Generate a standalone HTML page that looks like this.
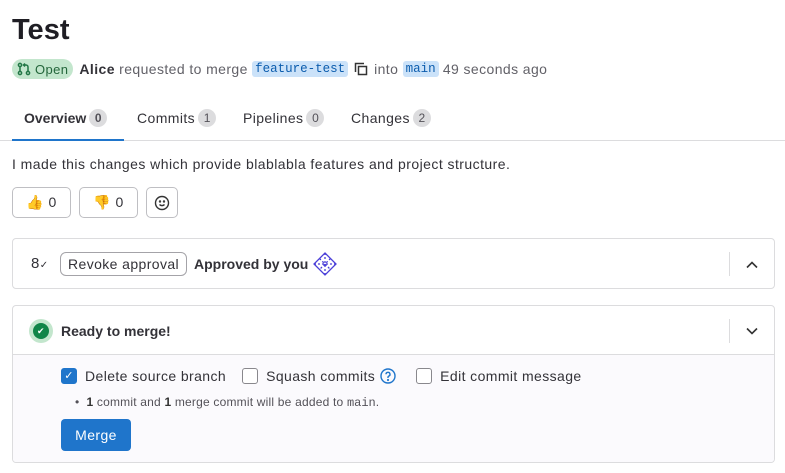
<!DOCTYPE html>
<html><head><style>
*{box-sizing:border-box;margin:0;padding:0}
body{width:785px;height:473px;background:#fff;font-family:"Liberation Sans",sans-serif;color:#333238;font-size:14px;position:relative;overflow:hidden;letter-spacing:0.4px}
.abs{position:absolute}
.mono{font-family:"Liberation Mono",monospace;font-size:12.5px;letter-spacing:0}
.code{background:#cbe2f9;color:#0b5cad;border-radius:3px;padding:1px 3px}
.cnt{display:inline-block;background:#dcdcde;color:#535158;border-radius:10px;font-size:12px;min-width:18px;height:18px;line-height:18px;text-align:center;margin-left:3px;letter-spacing:0}
.btn{position:absolute;border:1px solid #bfbfc3;border-radius:5px;background:#fff;display:flex;align-items:center;justify-content:center;font-size:14px}
.card{position:absolute;left:12px;width:763px;border:1px solid #dcdcde;border-radius:4px}
.cb{display:inline-block;width:16px;height:16px;border:1px solid #89888d;border-radius:3px;vertical-align:middle;margin-right:8px;background:#fff}
</style></head><body>
<div class="abs" style="left:12px;top:14px;font-size:29px;font-weight:bold;color:#1f1e24;letter-spacing:0">Test</div>
<div class="abs" style="left:12px;top:59px;height:20px;display:flex;align-items:center;white-space:nowrap;color:#626168">
 <span style="background:#c3e6cd;color:#24663b;border-radius:10px;padding:0 5px;height:20px;display:inline-flex;align-items:center;font-size:13px"><svg width="14" height="14" viewBox="0 0 14 14" fill="none" stroke="#217645" stroke-width="1.5"><circle cx="3" cy="3" r="1.6"/><circle cx="3" cy="11" r="1.6"/><circle cx="11" cy="11" r="1.6"/><path d="M3 4.6v4.8M11 9.4V5a2 2 0 0 0-2-2H7M8 1.5 6.5 3 8 4.5"/></svg>&nbsp;Open</span>
 <b style="color:#333238;margin-left:6px">Alice</b>&nbsp;requested to merge&nbsp;<span class="mono code">feature-test</span>
 <svg style="margin:0 6px" width="14" height="14" viewBox="0 0 14 14" fill="none" stroke="#333" stroke-width="1.5"><path d="M1.5 10V1.5H10"/><rect x="4.5" y="4.5" width="8" height="8"/></svg>into&nbsp;<span class="mono code">main</span>&nbsp;49 seconds ago
</div>
<div class="abs" style="left:0;top:140px;width:785px;height:1px;background:#dcdcde"></div>
<div class="abs" style="left:12px;top:139px;width:112px;height:2px;background:#1f75cb"></div>
<div class="abs" style="left:24px;top:109px;color:#333238;font-weight:bold;display:flex;align-items:center;letter-spacing:0">Overview<span class="cnt">0</span></div>
<div class="abs" style="left:137px;top:109px;display:flex;align-items:center">Commits<span class="cnt">1</span></div>
<div class="abs" style="left:243px;top:109px;display:flex;align-items:center">Pipelines<span class="cnt">0</span></div>
<div class="abs" style="left:351px;top:109px;display:flex;align-items:center">Changes<span class="cnt">2</span></div>
<div class="abs" style="left:12px;top:156px;letter-spacing:0.45px">I made this changes which provide blablabla features and project structure.</div>
<div class="btn" style="left:12px;top:187px;width:59px;height:31px">👍&nbsp;0</div>
<div class="btn" style="left:79px;top:187px;width:59px;height:31px">👎&nbsp;0</div>
<div class="btn" style="left:146px;top:187px;width:32px;height:31px"><svg width="16" height="16" viewBox="0 0 16 16" fill="none" stroke="#333" stroke-width="1.4"><circle cx="8" cy="8" r="6.5"/><circle cx="6" cy="6.5" r=".5"/><circle cx="10" cy="6.5" r=".5"/><path d="M5.5 9.5c1.3 1.5 3.7 1.5 5 0"/></svg></div>
<div class="card" style="top:238px;height:51px">
 <div class="abs" style="left:18px;top:16px;font-size:15px">8<span style="font-size:10px">✓</span></div>
 <div class="abs" style="left:47px;top:13px;height:24px;border:1px solid #a4a3a8;border-radius:6px;padding:0 7px;line-height:22px">Revoke approval</div>
 <div class="abs" style="left:181px;top:17px;font-weight:bold;letter-spacing:0">Approved by you</div>
 <svg class="abs" style="left:300px;top:13px" width="24" height="24" viewBox="0 0 24 24" fill="none" stroke="#4b3fd8" stroke-width="1.3"><path d="M12 1 23 12 12 23 1 12Z"/><path d="M6.5 6.5 17.5 17.5M17.5 6.5 6.5 17.5M12 1v22M1 12h22" stroke-dasharray="2 2"/></svg>
 <div class="abs" style="left:716px;top:13px;width:1px;height:24px;background:#dcdcde"></div>
 <svg class="abs" style="left:732px;top:19px" width="14" height="14" viewBox="0 0 14 14" fill="none" stroke="#333" stroke-width="1.6"><path d="M2 9.5 7 4.5l5 5"/></svg>
</div>
<div class="card" style="top:305px;height:158px;overflow:hidden">
 <div class="abs" style="left:16px;top:13px;width:24px;height:24px;border-radius:12px;background:#c3e6cd"></div>
 <div class="abs" style="left:20px;top:17px;width:16px;height:16px;border-radius:8px;background:#108548;color:#fff;font-size:9px;text-align:center;line-height:16px">✔</div>
 <div class="abs" style="left:48px;top:17px;font-weight:bold;letter-spacing:0">Ready to merge!</div>
 <div class="abs" style="left:716px;top:13px;width:1px;height:24px;background:#dcdcde"></div>
 <svg class="abs" style="left:732px;top:18px" width="14" height="14" viewBox="0 0 14 14" fill="none" stroke="#333" stroke-width="1.6"><path d="M2 4.5 7 9.5l5-5"/></svg>
 <div class="abs" style="left:0;top:48px;width:763px;height:110px;background:#fbfafd;border-top:1px solid #dcdcde">
  <div class="abs" style="left:48px;top:13px;display:flex;align-items:center;white-space:nowrap">
   <span class="cb" style="background:#1f75cb;border-color:#1f75cb;color:#fff;font-size:11px;text-align:center;line-height:14px">✓</span>Delete source branch
   <span class="cb" style="margin-left:16px">&nbsp;</span>Squash commits
   <svg style="margin:0 0 0 5px" width="16" height="16" viewBox="0 0 16 16" fill="none" stroke="#1f75cb" stroke-width="1.4"><circle cx="8" cy="8" r="7"/><path d="M6 6.3a2 2 0 1 1 2.6 1.9c-.4.2-.6.5-.6 1V10"/><circle cx="8" cy="12" r=".4"/></svg>
   <span class="cb" style="margin-left:20px">&nbsp;</span>Edit commit message
  </div>
  <div class="abs" style="left:62px;top:40px;font-size:12px;color:#535158;letter-spacing:0.2px">•&nbsp; <b style="color:#333">1</b> commit and <b style="color:#333">1</b> merge commit will be added to <span style="font-family:'Liberation Mono',monospace;letter-spacing:0">main</span>.</div>
  <div class="abs" style="left:48px;top:64px;width:70px;height:32px;background:#1f75cb;border-radius:4px;color:#fff;text-align:center;line-height:32px">Merge</div>
 </div>
</div>
</body></html>
